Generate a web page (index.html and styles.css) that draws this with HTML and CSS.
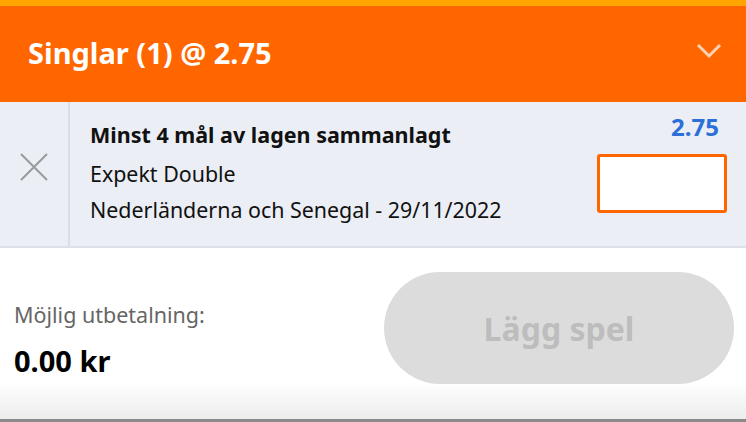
FILE: index.html
```html
<!DOCTYPE html>
<html lang="sv">
<head>
  <meta charset="UTF-8">
  <title>Kupong</title>
  <link rel="stylesheet" href="styles.css">
</head>
<body>
  <div class="topbar"></div>

  <div class="header">
    <span class="header-title">Singlar (1) @ 2.75</span>
    <svg class="chevron" width="26" height="16" viewBox="0 0 26 16">
      <path d="M2 2 L13 13 L24 2" fill="none" stroke="#ffd2b3" stroke-width="3"/>
    </svg>
  </div>

  <div class="bet">
    <div class="remove">
      <svg width="28" height="28" viewBox="0 0 28 28">
        <path d="M1 1 L27 27 M27 1 L1 27" stroke="#9a9a9a" stroke-width="2"/>
      </svg>
    </div>
    <div class="bet-info">
      <div class="bet-title">Minst 4 mål av lagen sammanlagt</div>
      <div class="bet-line">Expekt Double</div>
      <div class="bet-line">Nederländerna och Senegal - 29/11/2022</div>
    </div>
    <div class="bet-stake">
      <div class="odds">2.75</div>
      <input type="text" class="stake-input">
    </div>
  </div>

  <div class="footer">
    <div class="payout">
      <div class="payout-label">Möjlig utbetalning:</div>
      <div class="payout-value">0.00 kr</div>
    </div>
    <button class="place-btn" disabled>Lägg spel</button>
  </div>
</body>
</html>
```

FILE: styles.css
```css
body {
  margin: 0;
  font-family: "Noto Sans", "Open Sans", sans-serif;
  background: #fff;
  width: 746px;
  height: 422px;
  overflow: hidden;
}

.topbar { height: 6px; background: #ffa400; }

.header {
  height: 96px;
  background: #ff6600;
  display: flex;
  align-items: center;
  justify-content: space-between;
  padding: 0 24px 0 28px;
}
.header-title {
  color: #fff;
  font-size: 29px;
  font-weight: bold;
  margin-top: -4px;
}
.chevron { margin-top: -6px; }

.bet {
  height: 144px;
  background: #ebeef5;
  border-bottom: 2px solid #dde0e7;
  display: flex;
}
.remove {
  width: 70px;
  border-right: 2px solid #dadde4;
  display: flex;
  align-items: center;
  justify-content: center;
  padding-bottom: 15px;
  box-sizing: border-box;
}
.bet-info {
  flex: 1;
  padding: 18px 0 0 20px;
  color: #111;
}
.bet-title {
  font-size: 21.5px;
  font-weight: bold;
  line-height: 30px;
  margin-bottom: 6px;
}
.bet-line {
  font-size: 21.4px;
  line-height: 36px;
}
.bet-stake {
  width: 150px;
  padding: 10px 19px 0 0;
  display: flex;
  flex-direction: column;
  align-items: flex-end;
}
.odds {
  color: #2b6fd8;
  font-size: 24px;
  font-weight: bold;
  line-height: 30px;
  margin-right: 8px;
}
.stake-input {
  margin-top: 12px;
  width: 130px;
  height: 59px;
  box-sizing: border-box;
  border: 3px solid #ff6600;
  border-radius: 3px;
  background: #fff;
}

.footer {
  height: 174px;
  box-sizing: border-box;
  display: flex;
  align-items: flex-start;
  justify-content: space-between;
  padding: 24px 12px 0 14px;
  background: linear-gradient(#fff 0, #fff 135px, #ececec 171px);
  border-bottom: 3px solid #8a8a8a;
}
.payout { padding-top: 29px; }
.payout-label {
  color: #666;
  font-size: 21.5px;
  line-height: 28px;
}
.payout-value {
  color: #000;
  font-size: 29px;
  font-weight: bold;
  line-height: 42px;
  margin-top: 11px;
}
.place-btn {
  width: 350px;
  height: 112px;
  border: none;
  border-radius: 56px;
  background: #dcdcdc;
  color: #bdbdbd;
  font-family: inherit;
  font-size: 32px;
  font-weight: bold;
}
```
